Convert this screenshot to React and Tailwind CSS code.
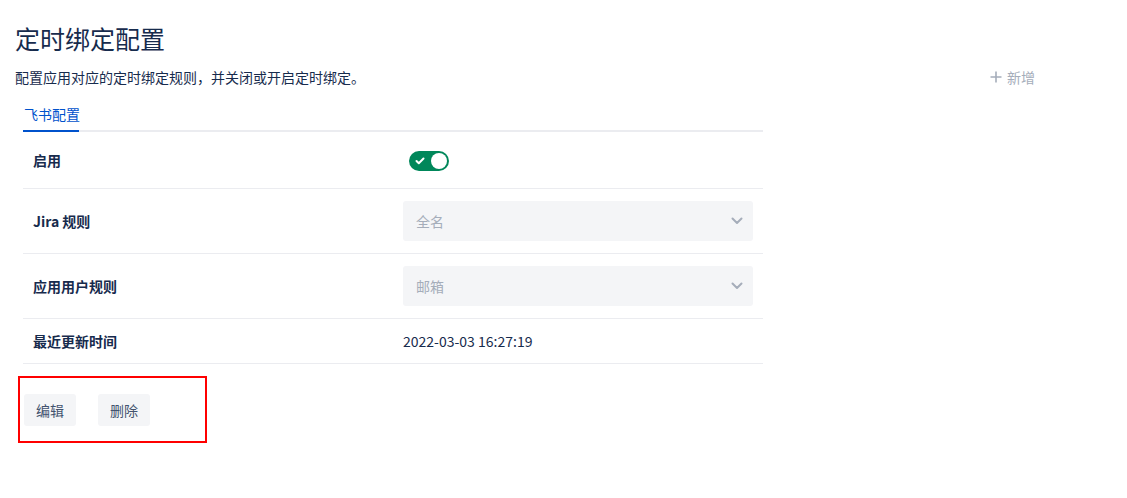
export default function App() {
  const font = { fontFamily: '"Noto Sans CJK SC", "Noto Sans", sans-serif' };
  return (
    <div className="min-h-[498px] bg-white pl-[15px] pt-[22px] text-[#172b4d]" style={font}>
      <h1 className="text-[25px] leading-[32px] font-normal text-[#172b4d]">定时绑定配置</h1>
      <div className="mt-[13px] flex w-[1020px] items-center justify-between">
        <p className="text-[14px] leading-[20px] text-[#172b4d]">配置应用对应的定时绑定规则，并关闭或开启定时绑定。</p>
        <div className="flex items-center gap-[5px] text-[14px] leading-[20px] text-[#a5adba]">
          <svg width="12" height="12" viewBox="0 0 12 12" fill="none" stroke="#a5adba" strokeWidth="1.6">
            <path d="M6 0.5v11M0.5 6h11" />
          </svg>
          <span>新增</span>
        </div>
      </div>
      <div className="ml-[8px] mt-[17px] w-[740px]">
        <div className="relative h-[28px] border-b-2 border-[#ebecf0]">
          <div className="absolute -bottom-[2px] left-0 h-[28px] w-[56px] border-b-2 border-[#0052cc]">
            <span className="block whitespace-nowrap pl-[1px] text-[14px] leading-[20px] text-[#0052cc]">飞书配置</span>
          </div>
        </div>
        <div className="flex h-[57px] items-center border-b border-[#ebecf0] pl-[10px]">
          <div className="w-[376px] text-[14px] font-bold leading-[20px]">启用</div>
          <div className="relative mt-[1px] flex h-[20px] w-[40px] items-center rounded-full bg-[#00875a] px-[2px]">
            <svg width="10" height="8" viewBox="0 0 10 8" fill="none" stroke="white" strokeWidth="2" strokeLinecap="round" strokeLinejoin="round" className="ml-[4px]">
              <path d="M1.5 4l2.3 2.3L8.5 1.5" />
            </svg>
            <div className="absolute right-[2px] top-[2px] h-[16px] w-[16px] rounded-full bg-white" />
          </div>
        </div>
        <div className="flex h-[65px] items-center border-b border-[#ebecf0] pl-[10px]">
          <div className="w-[370px] text-[14px] font-bold leading-[20px]">Jira 规则</div>
          <div className="flex h-[40px] w-[350px] items-center justify-between rounded-[3px] bg-[#f4f5f7] pl-[13px] pr-[10px]">
            <span className="text-[14px] leading-[20px] text-[#a5adba]">全名</span>
            <svg width="12" height="8" viewBox="0 0 12 8" fill="none" stroke="#a5adba" strokeWidth="2" strokeLinecap="round" strokeLinejoin="round">
              <path d="M1.5 1.5L6 6l4.5-4.5" />
            </svg>
          </div>
        </div>
        <div className="flex h-[65px] items-center border-b border-[#ebecf0] pl-[10px]">
          <div className="w-[370px] text-[14px] font-bold leading-[20px]">应用用户规则</div>
          <div className="flex h-[40px] w-[350px] items-center justify-between rounded-[3px] bg-[#f4f5f7] pl-[13px] pr-[10px]">
            <span className="text-[14px] leading-[20px] text-[#a5adba]">邮箱</span>
            <svg width="12" height="8" viewBox="0 0 12 8" fill="none" stroke="#a5adba" strokeWidth="2" strokeLinecap="round" strokeLinejoin="round">
              <path d="M1.5 1.5L6 6l4.5-4.5" />
            </svg>
          </div>
        </div>
        <div className="flex h-[45px] items-center border-b border-[#ebecf0] pl-[10px]">
          <div className="w-[370px] text-[14px] font-bold leading-[20px]">最近更新时间</div>
          <div className="text-[14px] leading-[20px] text-[#172b4d]">2022-03-03 16:27:19</div>
        </div>
      </div>
      <div className="ml-[3px] mt-[12px] flex h-[67px] w-[189px] gap-[22px] border-2 border-[#ff0000] pl-[4px] pt-[16px]">
        <button className="h-[32px] w-[52px] rounded-[3px] bg-[#f4f5f7] text-[14px] leading-[20px] text-[#42526e]">编辑</button>
        <button className="h-[32px] w-[52px] rounded-[3px] bg-[#f4f5f7] text-[14px] leading-[20px] text-[#42526e]">删除</button>
      </div>
    </div>
  );
}
